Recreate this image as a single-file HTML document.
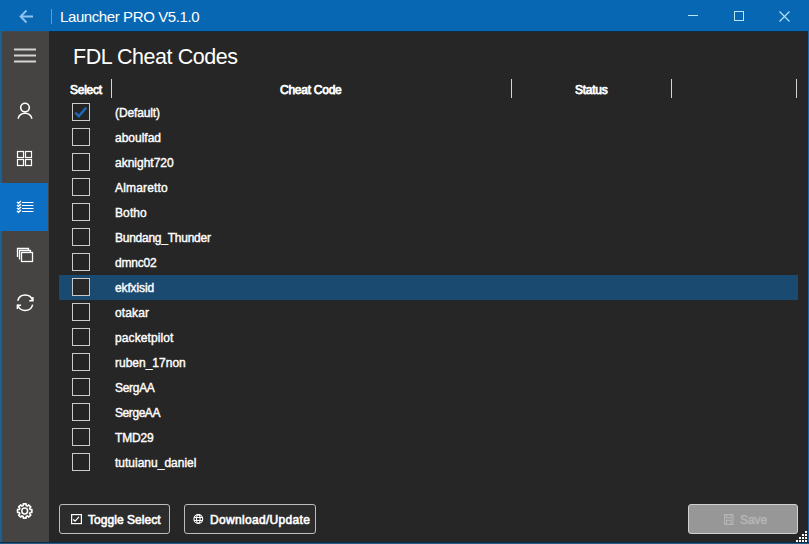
<!DOCTYPE html>
<html><head><meta charset="utf-8">
<style>
*{margin:0;padding:0;box-sizing:border-box}
html,body{width:809px;height:544px;overflow:hidden;background:#262626;font-family:"Liberation Sans",sans-serif}
.abs{position:absolute}
#title{left:0;top:0;width:809px;height:31px;background:#0867b3}
#title .t{left:60px;top:8px;font-size:15px;letter-spacing:-0.4px;color:#fff;white-space:nowrap}
#title .sep{left:51px;top:9px;width:1px;height:15px;background:#5d9bd3}
#side{left:0;top:31px;width:49px;height:513px;background:#454443}
#lb{left:0;top:31px;width:2px;height:513px;background:#20608c;box-shadow:1px 0 0 #3c4550}
#rb{left:808px;top:31px;width:1px;height:513px;background:#1a67a8;box-shadow:-1px 0 0 #1a2a3a}
#bb{left:0;top:543px;width:809px;height:1px;background:#235d88;box-shadow:0 -1px 0 #0f2b45}
#sel{left:0;top:183px;width:48px;height:48px;background:#0d6fc4}
.h1{left:73px;top:45px;font-size:21.5px;letter-spacing:-0.45px;color:#fff;white-space:nowrap}
.hd{top:83px;font-size:12px;-webkit-text-stroke:0.75px #fff;letter-spacing:-0.25px;color:#fff;white-space:nowrap}
.vs{top:79px;width:1px;height:19px;background:#d4d4d4}
.row{left:59px;width:739px;height:25px}
.row.s{background:#1b4a70}
.cb{left:13px;top:3px;width:18px;height:18px;border:1px solid #cbcbcb;background:#242424}
.row.s .cb{border-color:#c8c8c8;background:#282828}
.tx{left:56px;top:6px;font-size:12px;-webkit-text-stroke:0.4px #fff;color:#fff;white-space:nowrap;letter-spacing:0px}
.btn{top:504px;height:30px;border:1px solid #bdbdbd;border-radius:3px;background:#2c2c2c;color:#fff;font-size:12px;-webkit-text-stroke:0.6px currentColor;white-space:nowrap}
.btn div{letter-spacing:-0.1px}
</style></head><body>
<div id="title" class="abs">
  <svg class="abs" style="left:18px;top:9px" width="16" height="15" viewBox="0 0 16 15"><path d="M15 7.5H2.5M8.5 1.5L2.5 7.5L8.5 13.5" fill="none" stroke="#8fc3ef" stroke-width="1.8"/></svg>
  <div class="sep abs"></div>
  <div class="t abs">Launcher PRO V5.1.0</div>
  <div class="abs" style="left:688px;top:15px;width:10px;height:1px;background:#b8e4f6"></div>
  <div class="abs" style="left:734px;top:11px;width:10px;height:10px;border:1px solid #b8e4f6"></div>
  <svg class="abs" style="left:779px;top:11px" width="11" height="11" viewBox="0 0 11 11"><path d="M0.5 0.5L10.5 10.5M10.5 0.5L0.5 10.5" stroke="#b8e4f6" stroke-width="1.1"/></svg>
</div>
<div id="side" class="abs"></div>
<div id="lb" class="abs"></div>
<div id="rb" class="abs"></div>
<div id="bb" class="abs"></div>
<div id="sel" class="abs"></div>
<div class="abs" style="left:49px;top:31px;width:758px;height:1px;background:#142c3f"></div>
<div class="abs" style="left:2px;top:31px;width:47px;height:1px;background:#3e4a55"></div>
<!-- sidebar icons -->
<svg class="abs" style="left:0;top:32px" width="49" height="512" viewBox="0 32 49 512">
  <g fill="#d4d4d4"><rect x="14" y="48.5" width="22" height="2"/><rect x="14" y="54.5" width="22" height="2"/><rect x="14" y="60.5" width="22" height="2"/></g>
  <g fill="none" stroke="#fff" stroke-width="1.3">
    <circle cx="25" cy="107.6" r="4.3" stroke-width="1.6"/>
    <path stroke-width="1.6" d="M18.2 118.8 A6.8 5.6 0 0 1 31.8 118.8"/>
    <g stroke-width="1.2"><rect x="17.5" y="151.5" width="6" height="6"/><rect x="25.5" y="151.5" width="6" height="6"/>
    <rect x="17.5" y="159.5" width="6" height="6"/><rect x="25.5" y="159.5" width="6" height="6"/></g>
    <path stroke-width="1.1" d="M22 202.5h11.5M22 205.5h11.5M22 208.5h11.5M22 211.5h11.5"/>
    <path stroke-width="1.4" d="M17 202l1.5 1.3 2.5-2.3M17 205l1.5 1.3 2.5-2.3M17 208l1.5 1.3 2.5-2.3M17 211l1.5 1.3 2.5-2.3"/>
    <path d="M17.5 257V248.5H28.5V250.5"/>
    <path d="M19.5 259.5V250.5H30.5V252.5"/>
    <rect x="21.5" y="252.5" width="11" height="9"/>
    <path stroke-width="1.5" d="M17.74 300.8A7.7 7.7 0 0 1 32.66 300.8M17.74 304.6A7.7 7.7 0 0 0 32.66 304.6"/>
    <path stroke-width="1.5" d="M29.2 300.8H32.9V297.1M21.1 305.2H17.4V308.9"/>
    <circle cx="24.7" cy="511" r="2.9" stroke-width="1.5"/>
  </g>
  <path fill="none" stroke="#fff" stroke-width="1.6" stroke-linejoin="round" d="M30.08 509.46 L31.87 509.61 L31.87 512.39 L30.08 512.54 L29.60 513.71 L30.75 515.08 L28.78 517.05 L27.41 515.90 L26.24 516.38 L26.09 518.17 L23.31 518.17 L23.16 516.38 L21.99 515.90 L20.62 517.05 L18.65 515.08 L19.80 513.71 L19.32 512.54 L17.53 512.39 L17.53 509.61 L19.32 509.46 L19.80 508.29 L18.65 506.92 L20.62 504.95 L21.99 506.10 L23.16 505.62 L23.31 503.83 L26.09 503.83 L26.24 505.62 L27.41 506.10 L28.78 504.95 L30.75 506.92 L29.60 508.29Z"/>
</svg>

<div class="h1 abs">FDL Cheat Codes</div>
<div class="hd abs" style="left:70px">Select</div>
<div class="vs abs" style="left:111px"></div>
<div class="hd abs" style="left:280px">Cheat Code</div>
<div class="vs abs" style="left:511px"></div>
<div class="hd abs" style="left:575px">Status</div>
<div class="vs abs" style="left:671px"></div>
<div class="vs abs" style="left:796px"></div>

<div class="row abs" style="top:100px"><div class="cb abs"></div><svg class="abs" style="left:13px;top:3px" width="18" height="18" viewBox="0 0 18 18"><path d="M3.3 9.6L6.8 13.2L14.2 4.6" fill="none" stroke="#1f69bb" stroke-width="2.4"/></svg><div class="tx abs" style="letter-spacing:-0.12px">(Default)</div></div>
<div class="row abs" style="top:125px"><div class="cb abs"></div><div class="tx abs">aboulfad</div></div>
<div class="row abs" style="top:150px"><div class="cb abs"></div><div class="tx abs">aknight720</div></div>
<div class="row abs" style="top:175px"><div class="cb abs"></div><div class="tx abs" style="letter-spacing:0.18px">Almaretto</div></div>
<div class="row abs" style="top:200px"><div class="cb abs"></div><div class="tx abs" style="letter-spacing:0.1px">Botho</div></div>
<div class="row abs" style="top:225px"><div class="cb abs"></div><div class="tx abs" style="letter-spacing:-0.25px">Bundang_Thunder</div></div>
<div class="row abs" style="top:250px"><div class="cb abs"></div><div class="tx abs" style="letter-spacing:-0.22px">dmnc02</div></div>
<div class="row s abs" style="top:275px"><div class="cb abs"></div><div class="tx abs" style="letter-spacing:-0.13px">ekfxisid</div></div>
<div class="row abs" style="top:300px"><div class="cb abs"></div><div class="tx abs" style="letter-spacing:0.12px">otakar</div></div>
<div class="row abs" style="top:325px"><div class="cb abs"></div><div class="tx abs" style="letter-spacing:0.1px">packetpilot</div></div>
<div class="row abs" style="top:350px"><div class="cb abs"></div><div class="tx abs">ruben_17non</div></div>
<div class="row abs" style="top:375px"><div class="cb abs"></div><div class="tx abs" style="letter-spacing:-0.3px">SergAA</div></div>
<div class="row abs" style="top:400px"><div class="cb abs"></div><div class="tx abs" style="letter-spacing:-0.43px">SergeAA</div></div>
<div class="row abs" style="top:425px"><div class="cb abs"></div><div class="tx abs" style="letter-spacing:-0.17px">TMD29</div></div>
<div class="row abs" style="top:450px"><div class="cb abs"></div><div class="tx abs">tutuianu_daniel</div></div>

<div class="btn abs" style="left:59px;width:111px">
  <svg class="abs" style="left:11px;top:9px" width="11" height="11" viewBox="0 0 11 11"><rect x="0.6" y="0.6" width="9.8" height="9" fill="none" stroke="#fff" stroke-width="1.2"/><path d="M2.2 5.4l1.9 1.7 3.9-4.2" fill="none" stroke="#fff" stroke-width="1.3"/></svg>
  <div class="abs" style="left:28px;top:8px;letter-spacing:0.05px">Toggle Select</div>
</div>
<div class="btn abs" style="left:184px;width:132px">
  <svg class="abs" style="left:8px;top:9px" width="12" height="11" viewBox="0 0 12 11"><g fill="none" stroke="#fff" stroke-width="1.1"><circle cx="5.3" cy="5" r="4.4"/><ellipse cx="5.3" cy="5" rx="1.8" ry="4.4"/><path d="M1 3.5h8.6M1 6.5h8.6"/></g></svg>
  <div class="abs" style="left:25px;top:8px;letter-spacing:0.32px">Download/Update</div>
</div>
<div class="btn abs" style="left:688px;width:110px;background:#979797;border-color:#d0d0d0;color:#b4b4b4">
  <svg class="abs" style="left:35px;top:8.5px" width="10" height="11" viewBox="0 0 10 11"><g fill="none" stroke="#b4b4b4" stroke-width="1.2"><path d="M0.6 0.6h8.4v9.8h-8.4z"/><path d="M2.5 0.6v3.3h4.6v-3.3M2.5 10.4v-4h4.6v4"/></g></svg>
  <div class="abs" style="left:51px;top:8px">Save</div>
</div>
<svg class="abs" style="left:796px;top:531px" width="12" height="12" viewBox="0 0 12 12"><g fill="#fff"><rect x="9" y="0" width="2" height="2"/><rect x="6" y="3" width="2" height="2"/><rect x="9" y="3" width="2" height="2"/><rect x="3" y="6" width="2" height="2"/><rect x="6" y="6" width="2" height="2"/><rect x="9" y="6" width="2" height="2"/><rect x="0" y="9" width="2" height="2"/><rect x="3" y="9" width="2" height="2"/><rect x="6" y="9" width="2" height="2"/><rect x="9" y="9" width="2" height="2"/></g></svg>
</body></html>
